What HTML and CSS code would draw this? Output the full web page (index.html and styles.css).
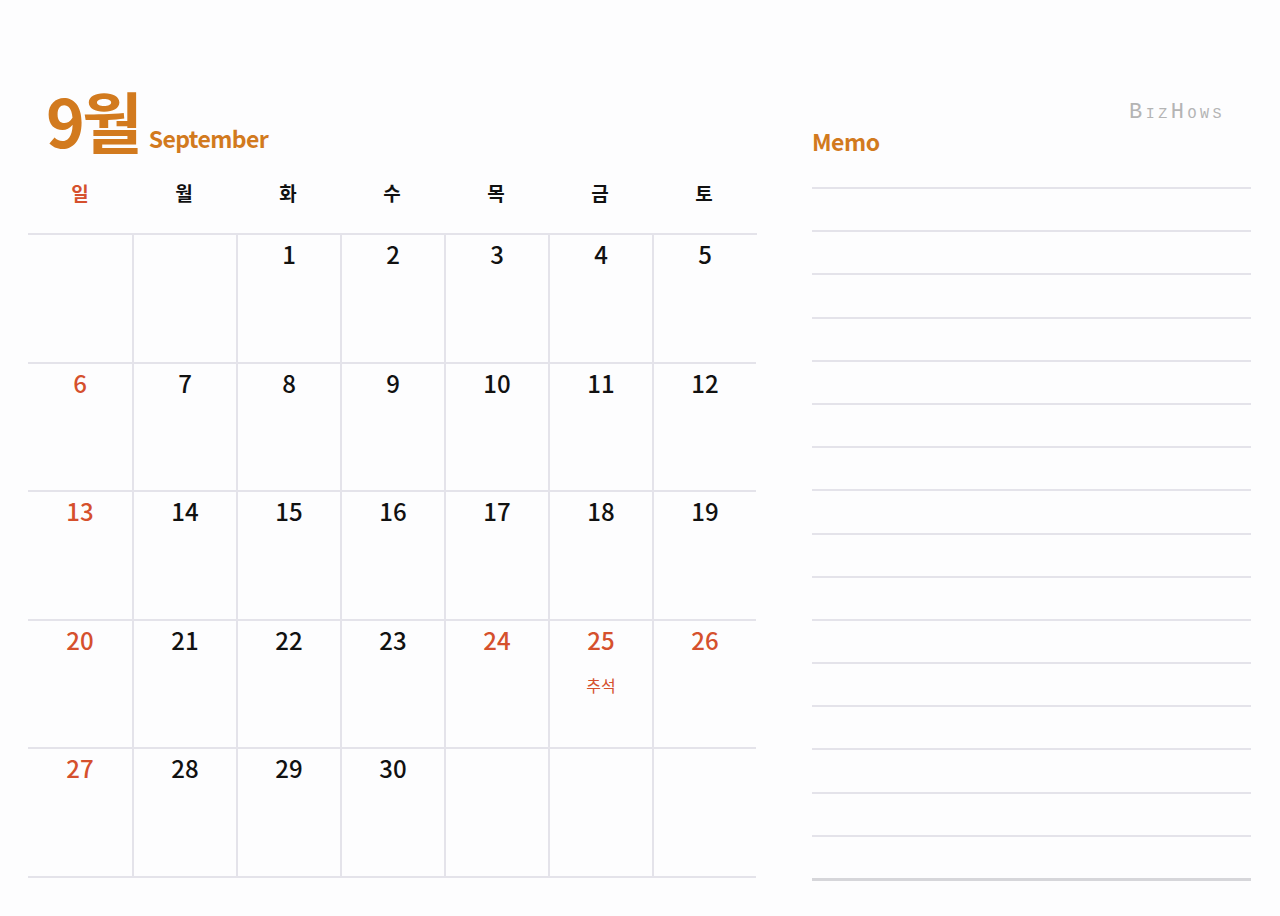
FILE: index.html
```html
<!DOCTYPE html>
<html lang="ko">
<head>
<meta charset="utf-8">
<title>9월 September</title>
<link rel="stylesheet" href="styles.css">
</head>
<body>
<div class="page">
  <section class="cal">
    <div class="title">
      <span class="month-num">9월</span>
      <span class="month-en">September</span>
    </div>
    <div class="weekdays">
      <div class="wd sun">일</div>
      <div class="wd">월</div>
      <div class="wd">화</div>
      <div class="wd">수</div>
      <div class="wd">목</div>
      <div class="wd">금</div>
      <div class="wd">토</div>
    </div>
    <div class="grid">
      <div class="cell"></div>
      <div class="cell"></div>
      <div class="cell"><span class="num">1</span></div>
      <div class="cell"><span class="num">2</span></div>
      <div class="cell"><span class="num">3</span></div>
      <div class="cell"><span class="num">4</span></div>
      <div class="cell"><span class="num">5</span></div>

      <div class="cell"><span class="num red">6</span></div>
      <div class="cell"><span class="num">7</span></div>
      <div class="cell"><span class="num">8</span></div>
      <div class="cell"><span class="num">9</span></div>
      <div class="cell"><span class="num">10</span></div>
      <div class="cell"><span class="num">11</span></div>
      <div class="cell"><span class="num">12</span></div>

      <div class="cell"><span class="num red">13</span></div>
      <div class="cell"><span class="num">14</span></div>
      <div class="cell"><span class="num">15</span></div>
      <div class="cell"><span class="num">16</span></div>
      <div class="cell"><span class="num">17</span></div>
      <div class="cell"><span class="num">18</span></div>
      <div class="cell"><span class="num">19</span></div>

      <div class="cell"><span class="num red">20</span></div>
      <div class="cell"><span class="num">21</span></div>
      <div class="cell"><span class="num">22</span></div>
      <div class="cell"><span class="num">23</span></div>
      <div class="cell"><span class="num red">24</span></div>
      <div class="cell"><span class="num red">25</span><span class="holiday">추석</span></div>
      <div class="cell"><span class="num red">26</span></div>

      <div class="cell"><span class="num red">27</span></div>
      <div class="cell"><span class="num">28</span></div>
      <div class="cell"><span class="num">29</span></div>
      <div class="cell"><span class="num">30</span></div>
      <div class="cell"></div>
      <div class="cell"></div>
      <div class="cell"></div>
    </div>
  </section>
  <section class="memo">
    <div class="memo-head">
      <span class="memo-title">Memo</span>
      <span class="brand">BizHows</span>
    </div>
    <div class="lines">
      <div class="line"></div><div class="line"></div><div class="line"></div><div class="line"></div>
      <div class="line"></div><div class="line"></div><div class="line"></div><div class="line"></div>
      <div class="line"></div><div class="line"></div><div class="line"></div><div class="line"></div>
      <div class="line"></div><div class="line"></div><div class="line"></div><div class="line"></div>
      <div class="line last"></div>
    </div>
  </section>
</div>
</body>
</html>
```

FILE: styles.css
```css
* { box-sizing: border-box; }
html, body { margin: 0; padding: 0; }
body {
  background: #fdfdfe;
  font-family: "Noto Sans CJK KR", "Noto Sans", sans-serif;
  color: #111;
  width: 1280px;
  height: 916px;
  overflow: hidden;
}
.page {
  display: flex;
  padding-left: 28px;
  gap: 55px;
}
.cal { width: 729px; }
.title {
  display: flex;
  align-items: baseline;
  height: 171px;
  padding-top: 86px;
  color: #d27a1e;
  line-height: 1;
}
.month-num {
  font-size: 66px;
  font-weight: 700;
  letter-spacing: -3px;
  margin-left: 18px;
}
.month-en {
  font-size: 23px;
  font-weight: 600;
  margin-left: 9px;
  letter-spacing: -0.6px;
}
.weekdays {
  display: grid;
  grid-template-columns: repeat(7, 104px);
  height: 64px;
  border-bottom: 2px solid #e4e3ea;
}
.wd {
  text-align: center;
  font-size: 19px;
  font-weight: 600;
  line-height: 1;
  padding-top: 12px;
  color: #111;
}
.wd.sun { color: #d5502d; }
.grid {
  display: grid;
  grid-template-columns: repeat(7, 104px);
  grid-auto-rows: 128.6px;
}
.cell {
  border-bottom: 2px solid #e4e3ea;
  border-left: 2px solid #e4e3ea;
  display: flex;
  flex-direction: column;
  align-items: center;
  padding-top: 5px;
}
.cell:nth-child(7n+1) { border-left: none; }
.num {
  font-size: 24px;
  font-weight: 500;
  line-height: 1.2;
  color: #111;
}
.num.red { color: #d5502d; }
.holiday {
  margin-top: 22px;
  font-size: 16px;
  line-height: 1;
  color: #d5502d;
}
.memo { width: 439px; }
.memo-head {
  display: flex;
  justify-content: space-between;
  align-items: flex-start;
  height: 187px;
  padding-top: 102px;
}
.memo-title {
  margin-top: 28px;
  font-size: 23px;
  font-weight: 600;
  color: #d27a1e;
  line-height: 1;
  letter-spacing: -0.5px;
}
.brand {
  font-family: "Liberation Mono", monospace;
  font-variant: small-caps;
  font-size: 22px;
  letter-spacing: 3.5px;
  color: #b4b4b4;
  margin-right: 26px;
  line-height: 1;
  font-weight: 400;
}
.lines {
  display: flex;
  flex-direction: column;
}
.line {
  height: 43.2px;
  border-top: 2px solid #e4e3ea;
}
.line.last {
  height: 3px;
  border-top: 3px solid #d6d6da;
}
```
